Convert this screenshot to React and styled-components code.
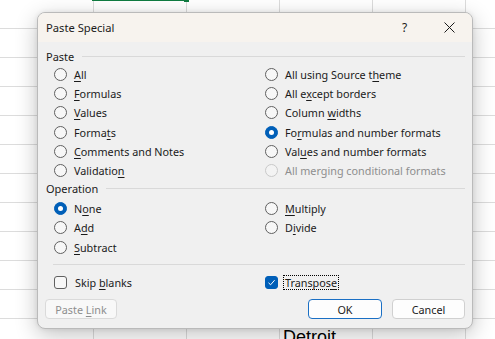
import React from "react";
import styled, { createGlobalStyle } from "styled-components";

const GlobalStyle = createGlobalStyle`
  html, body {
    margin: 0;
    padding: 0;
  }
  body {
    background: #ffffff;
    overflow: hidden;
    font-family: "Noto Sans", "Liberation Sans", sans-serif;
  }
`;

const Desktop = styled.div`
  position: relative;
  width: 495px;
  height: 339px;
  overflow: hidden;
  background: #ffffff;
`;

const Sheet = styled.div`
  display: grid;
  grid-template-columns: 94px repeat(5, 93px);
  grid-auto-rows: 29px;
`;

const Cell = styled.div`
  box-sizing: border-box;
  border-right: 1px solid #dcdcdc;
  border-bottom: 1px solid #dcdcdc;
  padding: 7px 0 0 3px;
  font-family: "Liberation Sans", Arial, sans-serif;
  font-size: 18px;
  line-height: 22px;
  color: #000;
  white-space: nowrap;
  overflow: hidden;
`;

const SelectionEdge = styled.div`
  position: absolute;
  left: 92px;
  top: 0;
  width: 93px;
  height: 1px;
  background: #107c41;
`;

const FillHandle = styled.div`
  position: absolute;
  left: 184px;
  top: 0;
  width: 5px;
  height: 2px;
  background: #107c41;
`;

const Dialog = styled.div`
  position: absolute;
  left: 37px;
  top: 12px;
  width: 436px;
  height: 317px;
  box-sizing: border-box;
  display: flex;
  flex-direction: column;
  overflow: hidden;
  border: 1px solid #bababa;
  border-radius: 8px;
  background: #f0f0f0;
  box-shadow: 0 6px 22px rgba(0, 0, 0, 0.24), 0 0 5px rgba(0, 0, 0, 0.08);
  font-family: "Noto Sans", "Liberation Sans", sans-serif;
  font-size: 10.8px;
  color: #1b1b1b;
`;

const TitleBar = styled.div`
  display: flex;
  align-items: center;
  height: 29px;
  flex-shrink: 0;
  padding-left: 8px;
  background: #f7f3ee;
`;

const Title = styled.div`
  flex: 1;
  font-size: 11.2px;
  color: #1b1b1b;
`;

const TitleButton = styled.div`
  display: flex;
  align-items: center;
  justify-content: center;
  width: 45px;
  height: 29px;
  font-size: 12px;
  color: #1b1b1b;
`;

const Body = styled.div`
  display: flex;
  flex-direction: column;
  padding: 6px 7px 0 8px;
`;

const SectionHeader = styled.div`
  display: flex;
  align-items: center;
  gap: 8px;
  height: 17px;
  font-size: 11px;

  &::after {
    content: "";
    flex: 1;
    height: 1px;
    background: #d9d9d9;
  }
`;

const OptionGrid = styled.div`
  display: grid;
  grid-template-columns: 211px 1fr;
  grid-auto-rows: 19.2px;
  padding-left: 8px;
  margin-top: ${(p) => p.$offset || 0}px;
`;

const Option = styled.div`
  display: flex;
  align-items: center;
  gap: 7px;
  white-space: nowrap;
  color: ${(p) => (p.$disabled ? "#8e8e8e" : "#1b1b1b")};

  u {
    text-decoration-thickness: 1px;
    text-underline-offset: 2px;
  }
`;

const Radio = styled.span`
  position: relative;
  flex-shrink: 0;
  box-sizing: border-box;
  width: 13px;
  height: 13px;
  border-radius: 50%;
  border: 1px solid
    ${(p) => (p.$checked ? "#005fb8" : p.$disabled ? "#c9c9c9" : "#606060")};
  background: ${(p) => (p.$checked ? "#005fb8" : p.$disabled ? "#f3f3f3" : "#f7f7f7")};

  &::after {
    content: "";
    display: ${(p) => (p.$checked ? "block" : "none")};
    position: absolute;
    left: 3px;
    top: 3px;
    width: 5px;
    height: 5px;
    border-radius: 50%;
    background: #ffffff;
  }
`;

const Box = styled.span`
  display: flex;
  align-items: center;
  justify-content: center;
  flex-shrink: 0;
  box-sizing: border-box;
  width: 13px;
  height: 13px;
  border-radius: 3px;
  border: 1px solid ${(p) => (p.$checked ? "#005fb8" : "#606060")};
  background: ${(p) => (p.$checked ? "#005fb8" : "#f7f7f7")};
`;

const FocusLabel = styled.span`
  margin-left: ${(p) => (p.$focused ? "-2px" : "0")};
  padding: 0 1px;
  line-height: 13px;
  border: ${(p) => (p.$focused ? "1px dotted #000" : "none")};
`;

const Separator = styled.div`
  height: 1px;
  margin: 7px 0 0 7px;
  background: #d9d9d9;
`;

const CheckRow = styled(OptionGrid)`
  grid-auto-rows: 19px;
  margin-top: 8px;
`;

const ButtonRow = styled.div`
  display: flex;
  align-items: center;
  gap: 10px;
  margin-top: 7.5px;
  margin-left: -1px;
`;

const Spacer = styled.div`
  flex: 1;
`;

const Button = styled.div`
  display: flex;
  align-items: center;
  justify-content: center;
  box-sizing: border-box;
  width: ${(p) => p.$width || 72}px;
  height: 20px;
  border-radius: 4px;
  border: 1px solid ${(p) => (p.$primary ? "#1a6fc4" : p.$disabled ? "#dadada" : "#d0d0d0")};
  background: ${(p) => (p.$disabled ? "#f8f8f8" : "#fdfdfd")};
  color: ${(p) => (p.$disabled ? "#8e8e8e" : "#1b1b1b")};
  white-space: nowrap;

  u {
    text-decoration-thickness: 1px;
    text-underline-offset: 2px;
  }
`;

const pasteOptions = [
  { label: <><u>A</u>ll</> },
  { label: <>All using Source t<u>h</u>eme</> },
  { label: <><u>F</u>ormulas</> },
  { label: <>All e<u>x</u>cept borders</> },
  { label: <><u>V</u>alues</> },
  { label: <>Column <u>w</u>idths</> },
  { label: <>Forma<u>t</u>s</> },
  { label: <>Fo<u>r</u>mulas and number formats</>, checked: true },
  { label: <><u>C</u>omments and Notes</> },
  { label: <>Val<u>u</u>es and number formats</> },
  { label: <>Validatio<u>n</u></> },
  { label: <>All merging conditional formats</>, disabled: true },
];

const operationOptions = [
  { label: <>N<u>o</u>ne</>, checked: true },
  { label: <><u>M</u>ultiply</> },
  { label: <>A<u>d</u>d</> },
  { label: <>D<u>i</u>vide</> },
  { label: <><u>S</u>ubtract</> },
];

const CloseIcon = () => (
  <svg width="11" height="11" viewBox="0 0 11 11">
    <path d="M0.5 0.5 L10.5 10.5 M10.5 0.5 L0.5 10.5" stroke="#1b1b1b" strokeWidth="1" fill="none" />
  </svg>
);

const CheckIcon = () => (
  <svg width="9" height="9" viewBox="0 0 9 9">
    <path d="M1.5 4.8 L3.6 6.8 L7.6 2.2" stroke="#ffffff" strokeWidth="1" fill="none" />
  </svg>
);

const OptionList = ({ options, offset }) => (
  <OptionGrid $offset={offset}>
    {options.map((o, i) => (
      <Option key={i} $disabled={o.disabled}>
        <Radio $checked={o.checked} $disabled={o.disabled} />
        <span>{o.label}</span>
      </Option>
    ))}
  </OptionGrid>
);

const App = () => {
  const cells = Array.from({ length: 72 });

  return (
    <Desktop>
      <GlobalStyle />
      <Sheet>
        {cells.map((_, i) => (
          <Cell key={i}>{i === 69 ? "Detroit" : ""}</Cell>
        ))}
      </Sheet>
      <SelectionEdge />
      <FillHandle />

      <Dialog>
        <TitleBar>
          <Title>Paste Special</Title>
          <TitleButton>?</TitleButton>
          <TitleButton>
            <CloseIcon />
          </TitleButton>
        </TitleBar>

        <Body>
          <SectionHeader>Paste</SectionHeader>
          <OptionList options={pasteOptions} />

          <SectionHeader>Operation</SectionHeader>
          <OptionList options={operationOptions} offset={2} />

          <Separator />

          <CheckRow>
            <Option>
              <Box />
              <FocusLabel>
                Skip <u>b</u>lanks
              </FocusLabel>
            </Option>
            <Option>
              <Box $checked>
                <CheckIcon />
              </Box>
              <FocusLabel $focused>
                Transpos<u>e</u>
              </FocusLabel>
            </Option>
          </CheckRow>

          <ButtonRow>
            <Button $disabled>
              Paste&nbsp;<u>L</u>ink
            </Button>
            <Spacer />
            <Button $primary $width={74}>OK</Button>
            <Button $width={73}>Cancel</Button>
          </ButtonRow>
        </Body>
      </Dialog>
    </Desktop>
  );
};

export default App;
